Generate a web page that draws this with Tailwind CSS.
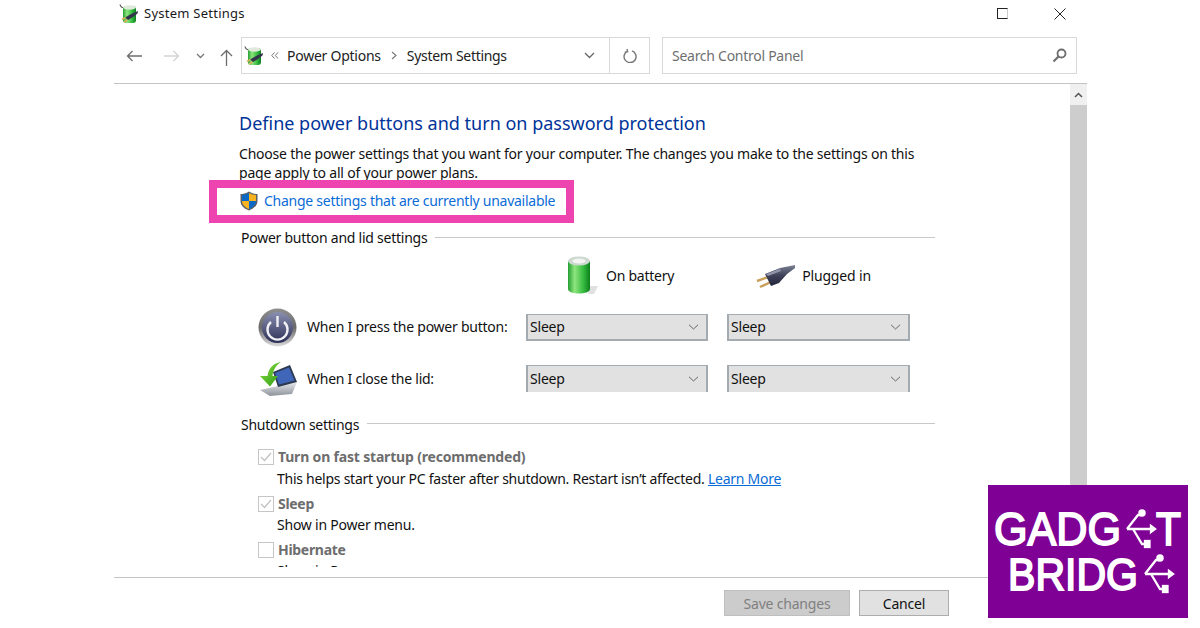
<!DOCTYPE html>
<html><head><meta charset="utf-8"><title>System Settings</title>
<script src="https://cdn.jsdelivr.net/npm/@tailwindcss/browser@4"></script></head>
<body class="bg-white">
<div class="relative w-[1200px] h-[628px] overflow-hidden bg-white font-['Noto_Sans',sans-serif] text-[14px] text-[#111]">
<svg width="0" height="0" class="absolute"><defs>
<linearGradient id="g1" x1="0" x2="1" y1="0" y2="0"><stop offset="0" stop-color="#23a032"/><stop offset=".3" stop-color="#8fe57e"/><stop offset=".7" stop-color="#35bb40"/><stop offset="1" stop-color="#0c7f1c"/></linearGradient>
<linearGradient id="g2" x1="0" x2="0" y1="0" y2="1"><stop offset="0" stop-color="#8a8fb0"/><stop offset="1" stop-color="#2c2f55"/></linearGradient>
<linearGradient id="g3" x1="0" x2="0" y1="0" y2="1"><stop offset="0" stop-color="#8f8f8f"/><stop offset=".5" stop-color="#6a6a6a"/><stop offset="1" stop-color="#dcdcdc"/></linearGradient>
<linearGradient id="g4" x1="0" x2="1" y1="0" y2="1"><stop offset="0" stop-color="#8ee03f"/><stop offset="1" stop-color="#2a9a16"/></linearGradient>
<linearGradient id="g5" x1="0" x2="0" y1="0" y2="1"><stop offset="0" stop-color="#7d8296"/><stop offset=".5" stop-color="#3f4259"/><stop offset="1" stop-color="#23243a"/></linearGradient>
<linearGradient id="g6" x1="0" x2="0" y1="0" y2="1"><stop offset="0" stop-color="#e8ebee"/><stop offset="1" stop-color="#8d929a"/></linearGradient>
</defs></svg>

<div class="flex flex-col ml-[114px] w-[973px] h-[628px]">
  <!-- title bar -->
  <div class="h-[37px] shrink-0 flex items-start pl-[5px]">
    <svg class="mt-[4px]" width="20" height="20" viewBox="0 0 20 20"><path d="M1 0.500 C1.500 3 3 4 6 4" stroke="#555" stroke-width="1.200" fill="none"/><rect x="4" y="2" width="13" height="17" rx="3" fill="url(#g1)"/><ellipse cx="10.500" cy="3.500" rx="6.500" ry="2.200" fill="#dfe9dc"/><path d="M6 13.500 L13 9.500 L19 7 L18.500 9.500 L14 13 L9 16 Z" fill="#33364a"/><path d="M6.500 13.500 L3 15.500 M8.500 16 L5 18" stroke="#d9b15c" stroke-width="1.500"/></svg>
    <span class="ml-[5px] mt-[3px] text-[13px] leading-[20px] text-[#1a1a1a] tracking-[0.25px]">System Settings</span>
    <div class="ml-auto flex items-start mr-[21px] mt-[8px] gap-[46px]">
      <span class="block w-[11px] h-[11px] border border-[#222] border-r-[#ccc]"></span>
      <svg width="12" height="12" viewBox="0 0 12 12"><path d="M0.5 0.5 L11.5 11.5 M11.5 0.5 L0.5 11.5" stroke="#222" fill="none"/></svg>
    </div>
  </div>
  <!-- nav bar -->
  <div class="h-[47px] shrink-0 border-b border-[#c4c4c4] flex items-start relative">
    <div class="h-[37px] w-[127px] flex items-center">
      <svg class="ml-[12px]" width="17" height="12" viewBox="0 0 17 12"><path d="M16 6 H1.5 M6.500 1 L1.500 6 L6.500 11" stroke="#6d6d6d" stroke-width="1.300" fill="none"/></svg>
      <svg class="ml-[20px]" width="17" height="12" viewBox="0 0 17 12"><path d="M1 6 H15.5 M10.500 1 L15.500 6 L10.500 11" stroke="#d4d4d4" stroke-width="1.300" fill="none"/></svg>
      <svg class="ml-[16px]" width="9" height="6" viewBox="0 0 9 6"><path d="M1 1 L4.500 4.500 L8 1" stroke="#777" stroke-width="1.300" fill="none"/></svg>
      <svg class="ml-[15px] mt-[3px]" width="13" height="17" viewBox="0 0 13 17"><path d="M6.500 17 V1.500 M1 7 L6.500 1.500 L12 7" stroke="#6d6d6d" stroke-width="1.300" fill="none"/></svg>
    </div>
    <div class="h-[37px] w-[409px] border border-[#d9d9d9] flex items-center">
      <svg class="ml-[2px]" width="20" height="20" viewBox="0 0 20 20"><path d="M1 0.500 C1.500 3 3 4 6 4" stroke="#555" stroke-width="1.200" fill="none"/><rect x="4" y="2" width="13" height="17" rx="3" fill="url(#g1)"/><ellipse cx="10.500" cy="3.500" rx="6.500" ry="2.200" fill="#dfe9dc"/><path d="M6 13.500 L13 9.500 L19 7 L18.500 9.500 L14 13 L9 16 Z" fill="#33364a"/><path d="M6.500 13.500 L3 15.500 M8.500 16 L5 18" stroke="#d9b15c" stroke-width="1.500"/></svg>
      <svg class="ml-[7px]" width="8" height="7" viewBox="0 0 8 7"><path d="M3.500 .5 L.8 3.500 L3.500 6.500 M7 .5 L4.300 3.500 L7 6.500" stroke="#777" fill="none"/></svg>
      <span class="ml-[8px] text-[14px] leading-[20px] text-[#222] tracking-[-0.25px]">Power Options</span>
      <svg class="ml-[10px]" width="6" height="9" viewBox="0 0 6 9"><path d="M1 1 L5 4.500 L1 8" stroke="#777" stroke-width="1.100" fill="none"/></svg>
      <span class="ml-[10px] text-[14px] leading-[20px] text-[#222] tracking-[-0.3px]">System Settings</span>
      <svg class="ml-auto mr-[14px]" width="11" height="7" viewBox="0 0 11 7"><path d="M1 1 L5.500 5.500 L10 1" stroke="#666" stroke-width="1.300" fill="none"/></svg>
      <span class="w-[40px] h-full border-l border-[#d9d9d9] flex items-center justify-center">
        <svg class="ml-[1px]" width="14" height="15" viewBox="0 0 14 15"><path d="M9 2.400 A6 6 0 1 1 4.600 2.600 M4 0.500 L4.600 3.200 L1.800 3.800" stroke="#777" stroke-width="1.400" fill="none" transform="translate(0 .5)"/></svg>
      </span>
    </div>
    <div class="h-[37px] ml-[12px] w-[415px] border border-[#d9d9d9] flex items-center pl-[9px]">
      <span class="text-[14px] leading-[20px] text-[#6f6f6f] tracking-[-0.27px]">Search Control Panel</span>
      <svg class="ml-auto mr-[9px]" width="15" height="15" viewBox="0 0 15 15"><circle cx="9.500" cy="5.500" r="4" stroke="#6d6d6d" stroke-width="1.800" fill="none"/><path d="M6.500 8.500 L1.500 13.500" stroke="#6d6d6d" stroke-width="2.200"/></svg>
    </div>
  </div>
  <!-- content -->
  <div class="h-[494px] shrink-0 flex border-b border-[#c4c4c4] box-border">
    <div class="w-[956px] h-[483px] overflow-hidden pl-[125px] pt-[27px]">
      <h1 class="text-[18px] leading-[24px] text-[#003399] font-normal">Define power buttons and turn on password protection</h1>
      <p class="mt-[9px] w-[690px] text-[14px] leading-[19px] text-[#111] tracking-[-0.21px]">Choose the power settings that you want for your computer. The changes you make to the settings on this page apply to all of your power plans.</p>
      <div class="relative mt-[7px] h-[24px] flex items-center">
        <div class="absolute left-[-30px] top-[-9px] w-[365px] h-[43px] border-[8px] border-[#ee44b0]"></div>
        <svg class="ml-[1px]" width="18" height="20" viewBox="0 0 18 20"><path d="M9 0.500 C12 2.500 15 3 17.500 3 V10 C17.500 15 13 18 9 19.500 C5 18 0.500 15 0.500 10 V3 C3 3 6 2.500 9 0.500 Z" fill="#5a5f68"/><path d="M9 2 V10 H2 V4 C4.500 4 7 3.200 9 2 Z" fill="#0b68c4"/><path d="M9 2 C11 3.200 13.500 4 16 4 V10 H9 Z" fill="#f6b21f"/><path d="M2 10 H9 V18 C5.500 16.600 2 14.200 2 10 Z" fill="#f6b21f"/><path d="M9 10 H16 C16 14.200 12.500 16.600 9 18 Z" fill="#0b68c4"/></svg>
        <a class="ml-[6px] text-[14px] leading-[20px] text-[#0a6cd6] tracking-[-0.26px]">Change settings that are currently unavailable</a>
      </div>
      <div class="mt-[14px] h-[22px] flex items-center pl-[2px] w-[696px]">
        <span class="leading-[20px] tracking-[-0.25px]">Power button and lid settings</span>
        <span class="flex-1 h-px bg-[#c8c8c8] ml-[8px] mt-[-2px]"></span>
      </div>
      <!-- header row -->
      <div class="mt-[2px] h-[50px] flex items-start">
        <div class="w-[329px]"></div>
        <svg class="mt-[5px]" width="30" height="38" viewBox="0 0 30 38"><path d="M22 30 L30 30 L26 38 L20 38 Z" fill="#ccc" opacity=".6"/><path d="M0 5 H22 V33 C22 39 0 39 0 33 Z" fill="url(#g1)"/><ellipse cx="11" cy="5" rx="11" ry="4.500" fill="#cdd8d0"/><ellipse cx="11" cy="5" rx="6.500" ry="2.500" fill="#f2f5f2"/></svg>
        <span class="ml-[8px] mt-[15px] leading-[20px] tracking-[-0.25px]">On battery</span>
        <svg class="ml-[82px] mt-[14px]" width="40" height="24" viewBox="0 0 40 24"><path d="M1 16 L12 12 M4 22 L15 17" stroke="#c9a05a" stroke-width="2.400"/><path d="M9 9 L24 3 L39 0 L39 3 L31 9 L23 18 L15 21 Z" fill="url(#g5)"/><path d="M10 9 L24 4 L25 6 L12 11 Z" fill="#9095aa"/></svg>
        <span class="ml-[6px] mt-[15px] leading-[20px] tracking-[-0.15px]">Plugged in</span>
      </div>
      <!-- row 1 -->
      <div class="mt-[6px] h-[40px] flex items-center pl-[19px]">
        <svg width="39" height="39" viewBox="0 0 39 39"><circle cx="19.500" cy="19.500" r="19" fill="url(#g3)"/><circle cx="19.500" cy="19.500" r="15.500" fill="url(#g2)"/><path d="M13 13 A10 10 0 1 0 26 13" stroke="#f0f0f5" stroke-width="2.400" fill="none" transform="translate(0 1)"/><path d="M19.500 8 V19" stroke="#f0f0f5" stroke-width="2.400"/></svg>
        <span class="ml-[10px] w-[219px] leading-[20px] tracking-[-0.25px]">When I press the power button:</span>
        <div class="w-[182px] h-[27px] bg-[#e1e1e1] border-2 border-[#a3abb0] border-t border-b-2 flex items-center pl-[2px] pr-[7px]"><span class="leading-[20px] tracking-[-0.2px]">Sleep</span><svg class="ml-auto" width="11" height="6" viewBox="0 0 11 6"><path d="M1 .8 L5.500 5 L10 .8" stroke="#666" fill="none"/></svg></div>
        <div class="ml-[19px] w-[183px] h-[27px] bg-[#e1e1e1] border-2 border-[#a3abb0] border-t border-b-2 flex items-center pl-[2px] pr-[7px]"><span class="leading-[20px] tracking-[-0.2px]">Sleep</span><svg class="ml-auto" width="11" height="6" viewBox="0 0 11 6"><path d="M1 .8 L5.500 5 L10 .8" stroke="#666" fill="none"/></svg></div>
      </div>
      <!-- row 2 -->
      <div class="mt-[12px] h-[40px] flex items-center pl-[19px]">
        <svg width="39" height="36" viewBox="0 0 39 36"><path d="M2 29 L20 25 L39 21 L34 33 L12 35 Z" fill="url(#g6)"/><path d="M15 11 L32 4 L39 21 L20 26 Z" fill="#2d3950"/><path d="M17 12 L31 6.500 L36.500 19.500 L21 23.500 Z" fill="#3f66b8"/><path d="M23 1 C17 2 11 5 9.500 15 L2 15 L12 25.500 L20 15 L14.500 15 C15 9 18 4 23 1 Z" fill="url(#g4)"/></svg>
        <span class="ml-[10px] w-[219px] leading-[20px] tracking-[-0.25px]">When I close the lid:</span>
        <div class="w-[182px] h-[27px] mb-[1px] bg-[#e1e1e1] border-2 border-[#a3abb0] border-b-0 border-t flex items-center pl-[2px] pr-[7px]"><span class="leading-[20px] tracking-[-0.2px]">Sleep</span><svg class="ml-auto" width="11" height="6" viewBox="0 0 11 6"><path d="M1 .8 L5.500 5 L10 .8" stroke="#666" fill="none"/></svg></div>
        <div class="ml-[19px] w-[183px] h-[27px] mb-[1px] bg-[#e1e1e1] border-2 border-[#a3abb0] border-b-0 border-t flex items-center pl-[2px] pr-[7px]"><span class="leading-[20px] tracking-[-0.2px]">Sleep</span><svg class="ml-auto" width="11" height="6" viewBox="0 0 11 6"><path d="M1 .8 L5.500 5 L10 .8" stroke="#666" fill="none"/></svg></div>
      </div>
      <!-- shutdown -->
      <div class="mt-[15px] h-[22px] flex items-center pl-[2px] w-[696px]">
        <span class="leading-[20px] tracking-[-0.25px]">Shutdown settings</span>
        <span class="flex-1 h-px bg-[#c8c8c8] ml-[8px] mt-[-4px]"></span>
      </div>
      <div class="mt-[10px] pl-[19px] flex flex-col">
        <div class="h-[22px] flex items-center">
          <span class="w-[16px] h-[16px] border border-[#c6c6c6] flex items-center justify-center"><svg width="12" height="10" viewBox="0 0 12 10"><path d="M1 5 L4.500 8.500 L11 1" stroke="#c0c0c0" stroke-width="1.200" fill="none"/></svg></span>
          <span class="ml-[4px] font-bold text-[#6d6d6d] leading-[20px] tracking-[-0.18px]">Turn on fast startup (recommended)</span>
        </div>
        <div class="h-[22px] pl-[19px] leading-[22px] tracking-[-0.26px]">This helps start your PC faster after shutdown. Restart isn’t affected. <a class="text-[#0a6cd6] underline">Learn More</a></div>
        <div class="mt-[3px] h-[22px] flex items-center">
          <span class="w-[16px] h-[16px] border border-[#c6c6c6] flex items-center justify-center"><svg width="12" height="10" viewBox="0 0 12 10"><path d="M1 5 L4.500 8.500 L11 1" stroke="#c0c0c0" stroke-width="1.200" fill="none"/></svg></span>
          <span class="ml-[4px] font-bold text-[#6d6d6d] leading-[20px] tracking-[-0.3px]">Sleep</span>
        </div>
        <div class="h-[20px] pl-[19px] leading-[20px] tracking-[-0.23px]">Show in Power menu.</div>
        <div class="mt-[4px] h-[22px] flex items-center">
          <span class="w-[16px] h-[16px] border border-[#c6c6c6]"></span>
          <span class="ml-[4px] font-bold text-[#6d6d6d] leading-[20px] tracking-[-0.3px]">Hibernate</span>
        </div>
        <div class="h-[20px] pl-[19px] leading-[20px] tracking-[-0.23px]">Show in Power menu.</div>
      </div>
    </div>
    <!-- scrollbar -->
    <div class="w-[17px] h-[493px] bg-[#f0f0f0] flex flex-col">
      <div class="h-[21px] flex items-center justify-center"><svg width="9" height="6" viewBox="0 0 9 6"><path d="M1 5 L4.500 1.500 L8 5" stroke="#555" stroke-width="1.500" fill="none"/></svg></div>
      <div class="flex-1 bg-[#cdcdcd]"></div>
    </div>
  </div>
  <!-- footer -->
  <div class="flex-1 flex items-start pl-[610px] pt-[12px]">
    <button class="w-[126px] h-[26px] bg-[#cccccc] border border-[#bfbfbf] text-[#808080] text-[14px] tracking-[-0.2px]">Save changes</button>
    <button class="ml-[9px] w-[90px] h-[26px] bg-[#e1e1e1] border border-[#adadad] text-[#111] text-[14px] tracking-[-0.2px]">Cancel</button>
  </div>
</div>

<!-- logo -->
<div class="absolute left-[988px] top-[485px] w-[200px] h-[133px] bg-[#7f0094]">
  <svg width="200" height="133" viewBox="0 0 200 133" class="font-['Liberation_Sans',sans-serif]">
    <text x="6" y="60" font-size="47" fill="#fff" stroke="#fff" stroke-width="1.800" textLength="127" lengthAdjust="spacingAndGlyphs">GADG</text>
    <text x="168" y="60" font-size="47" fill="#fff" stroke="#fff" stroke-width="1.800" textLength="25" lengthAdjust="spacingAndGlyphs">T</text>
    <text x="20" y="105" font-size="45" fill="#fff" stroke="#fff" stroke-width="1.800" textLength="130" lengthAdjust="spacingAndGlyphs">BRIDG</text>
    <g stroke="#fff" stroke-width="2.300" fill="#fff">
      <path d="M139 44 H164 M139 44 L150 30 H153 M145 44 L154 59 H158" fill="none"/>
      <circle cx="154" cy="28" r="2.600"/><rect x="157" y="56" width="4.500" height="6"/><path d="M163 41 L167 44 L163 47 Z"/>
      <path d="M157 89 H182 M157 89 L168 75 H171 M163 89 L172 104 H176" fill="none"/>
      <circle cx="172" cy="73" r="2.600"/><rect x="175" y="101" width="4.500" height="6"/><path d="M181 86 L185 89 L181 92 Z"/>
    </g>
  </svg>
</div>
</div>
</body></html>
